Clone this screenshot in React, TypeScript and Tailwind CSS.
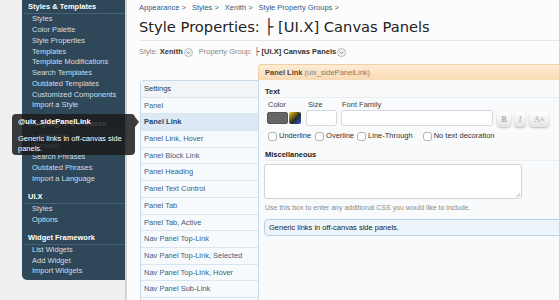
import React from "react";

const sections = [
  {
    title: "Styles & Templates",
    items: [
      "Styles",
      "Color Palette",
      "Style Properties",
      "Templates",
      "Template Modifications",
      "Search Templates",
      "Outdated Templates",
      "Customized Components",
      "Import a Style",
    ],
  },
  {
    title: "Languages & Phrases",
    items: ["Languages", "Phrases", "Search Phrases", "Outdated Phrases", "Import a Language"],
  },
  { title: "UI.X", items: ["Styles", "Options"] },
  { title: "Widget Framework", items: ["List Widgets", "Add Widget", "Import Widgets"] },
];

const settings = [
  "Panel",
  "Panel Link",
  "Panel Link, Hover",
  "Panel Block Link",
  "Panel Heading",
  "Panel Text Control",
  "Panel Tab",
  "Panel Tab, Active",
  "Nav Panel Top-Link",
  "Nav Panel Top-Link, Selected",
  "Nav Panel Top-Link, Hover",
  "Nav Panel Sub-Link",
];

function DropCircle() {
  return (
    <svg width="9" height="9" viewBox="0 0 9 9" className="inline-block ml-[1px] align-[-1px]">
      <circle cx="4.5" cy="4.5" r="4" fill="#f4f4f4" stroke="#a9a9a9" strokeWidth="0.8" />
      <path d="M2.6 3.7 L4.5 5.6 L6.4 3.7" fill="none" stroke="#777" strokeWidth="0.9" />
    </svg>
  );
}

function Check({ label, className = "" }: { label: string; className?: string }) {
  return (
    <div className={"flex items-center gap-[2px] " + className}>
      <span className="w-[9px] h-[9px] rounded-[3px] border border-[#b3b3b3] bg-white" />
      <span>{label}</span>
    </div>
  );
}

export default function App() {
  return (
    <div className="w-[559px] h-[300px] overflow-hidden relative flex bg-[#efefef] font-['Liberation_Sans',Arial,sans-serif] text-[7.5px] text-[#333]">
      {/* admin sidebar */}
      <div className="w-[125px] shrink-0 pl-[22px]">
        <div className="bg-[#2e4859] rounded-bl-[5px] pt-[1.3px] pb-[3px]">
          {sections.map((s, i) => (
            <div key={s.title} className={i > 0 ? "mt-[6.5px]" : ""}>
              <div className="ml-[2px] h-[13px] border-b border-[#46637a] pl-[4px] leading-[12px] font-bold text-white">
                {s.title}
              </div>
              {s.items.map((it) => (
                <div key={it} className="h-[10.75px] leading-[10.75px] pl-[10px] text-[#cfdde9]">
                  {it}
                </div>
              ))}
            </div>
          ))}
        </div>
      </div>

      {/* main content */}
      <div className="flex-1 border-l-2 border-[#d3d3d3] bg-[#fcfcfc] pl-[12px] min-w-0">
        <div className="pt-[3px] h-[13px] leading-[10px] flex gap-[6px] text-[#2f5d88]">
          <span>Appearance <span className="text-[#555]">&gt;</span></span>
          <span>Styles <span className="text-[#555]">&gt;</span></span>
          <span>Xenith <span className="text-[#555]">&gt;</span></span>
          <span>Style Property Groups <span className="text-[#555]">&gt;</span></span>
        </div>
        <div className="mt-[5px] font-['DejaVu_Sans',sans-serif] text-[14.7px] leading-[18px] text-[#222]">
          Style Properties: ├ [UI.X] Canvas Panels
        </div>
        <div className="mt-[4px] border-t border-[#e8e8e8]" />
        <div className="mt-[6px] h-[10px] leading-[10px] flex items-center">
          <span className="text-[#888]">Style:&nbsp;</span>
          <span className="font-bold text-[#333]">Xenith</span>
          <DropCircle />
          <span className="ml-[6px] text-[#888]">Property Group:&nbsp;</span>
          <span className="font-bold text-[#333]">├ [UI.X] Canvas Panels</span>
          <DropCircle />
        </div>

        <div className="mt-[7px] flex">
          {/* settings list */}
          <div className="ml-[1px] mt-[16px] w-[118px] shrink-0 border-l border-t border-[#c8d9e6] rounded-tl-[4px] bg-[#f7fafc]">
            <div className="h-[16.7px] leading-[16.7px] pl-[3px] border-b border-[#dbe5ee] bg-[#f2f5f8] text-[#333]">
              Settings
            </div>
            {settings.map((s) => (
              <div
                key={s}
                className={
                  "h-[16.7px] leading-[16.7px] pl-[3px] border-b border-[#dbe5ee] " +
                  (s === "Panel Link" ? "bg-[#dce9f4] text-[#1d466b] font-semibold" : "text-[#3a5f80]")
                }
              >
                {s}
              </div>
            ))}
            <div className="h-[16.7px] border-b border-[#dbe5ee]" />
          </div>

          {/* property panel */}
          <div className="w-[320px] shrink-0 flex flex-col">
            <div className="h-[16px] leading-[16px] pl-[6px] rounded-tl-[4px] bg-linear-to-b from-[#fdecd5] to-[#f9dab4] border-t border-l border-[#efcfa5]">
              <span className="font-bold text-[#5a4330]">Panel Link</span>{" "}
              <span className="text-[#8c7a68]">(uix_sidePanelLink)</span>
            </div>
            <div className="h-[230px] border-l border-[#c8dbea] bg-[#f9fafb] pl-[6px]">
              <div className="pt-[7px] h-[18px] leading-[10px] font-bold text-[#222] border-b border-[#eaedf0]">Text</div>

              <div className="ml-[2px] mt-[2px] flex gap-[4px]">
                <div className="w-[36px]">
                  <div className="h-[10px] leading-[10px] pl-[1px] text-[#444]">Color</div>
                  <div className="h-[16px] flex items-center gap-[1px]">
                    <span className="w-[21px] h-[12px] rounded-[2px] bg-[#666] border border-[#555]" />
                    <span className="w-[12px] h-[12px] rounded-[2px] bg-[linear-gradient(135deg,#f2cf00_0%,#2a2a2a_55%,#1d5fd2_100%)]" />
                  </div>
                </div>
                <div className="w-[31px] ml-[-1px]">
                  <div className="h-[10px] leading-[10px] pl-[2px] text-[#444]">Size</div>
                  <div className="h-[16px] rounded-[3px] border border-[#d4d8dc] bg-white" />
                </div>
                <div className="w-[152px]">
                  <div className="h-[10px] leading-[10px] pl-[1px] text-[#444]">Font Family</div>
                  <div className="h-[16px] rounded-[3px] border border-[#d4d8dc] bg-white" />
                </div>
                <div className="mt-[12px] flex gap-[3px] font-['Liberation_Serif',serif] text-[#a9a9a9]">
                  <span className="w-[14px] h-[15px] rounded-[4px] bg-linear-to-b from-white to-[#e3e3e3] shadow-[0_1px_2px_rgba(0,0,0,0.25)] flex items-center justify-center font-bold text-[8px]">B</span>
                  <span className="w-[12px] h-[15px] rounded-[4px] bg-linear-to-b from-white to-[#e3e3e3] shadow-[0_1px_2px_rgba(0,0,0,0.25)] flex items-center justify-center italic text-[8px]">I</span>
                  <span className="w-[20px] h-[15px] rounded-[4px] bg-linear-to-b from-white to-[#e3e3e3] shadow-[0_1px_2px_rgba(0,0,0,0.25)] flex items-center justify-center text-[8px]">A<span className="text-[6px]">A</span></span>
                </div>
              </div>

              <div className="ml-[3px] mt-[4px] h-[10px] flex items-center text-[#333]">
                <Check label="Underline" />
                <Check label="Overline" className="ml-[4px]" />
                <Check label="Line-Through" className="ml-[3px]" />
                <Check label="No text decoration" className="ml-[10px]" />
              </div>

              <div className="mt-[9px] h-[11px] leading-[10px] font-bold text-[#222] border-b border-[#eaedf0]">Miscellaneous</div>
              <div className="mt-[3px] ml-[-1px] w-[258px] h-[35px] rounded-[3px] border border-[#cfd3d7] bg-white relative">
                <svg width="5" height="5" viewBox="0 0 5 5" className="absolute right-[1px] bottom-[1px]">
                  <path d="M1 5 L5 1 M3 5 L5 3" stroke="#999" strokeWidth="0.6" />
                </svg>
              </div>
              <div className="mt-[4px] h-[10px] leading-[10px] text-[#8a8a8a] text-[7px]">
                Use this box to enter any additional CSS you would like to include.
              </div>
              <div className="mt-[6px] ml-[-1px] h-[17px] leading-[15px] rounded-[4px] border border-[#bcd2e3] bg-[#eef5fa] pl-[4px] text-[#222]">
                Generic links in off-canvas side panels.
              </div>
            </div>
          </div>
        </div>
      </div>

      {/* tooltip */}
      <div className="absolute left-[12px] top-[114px] w-[123px] h-[41px] rounded-[4px] bg-[rgba(28,28,28,0.86)] pl-[6px] pt-[3px] text-white">
        <div className="h-[10px] leading-[10px] font-bold">@uix_sidePanelLink</div>
        <div className="mt-[7px] leading-[9.6px] pr-[4px]">Generic links in off-canvas side panels.</div>
        <span className="absolute right-[-4px] top-[3px] w-0 h-0 border-y-[5px] border-y-transparent border-l-[4px] border-l-[rgba(28,28,28,0.86)]" />
      </div>
    </div>
  );
}
